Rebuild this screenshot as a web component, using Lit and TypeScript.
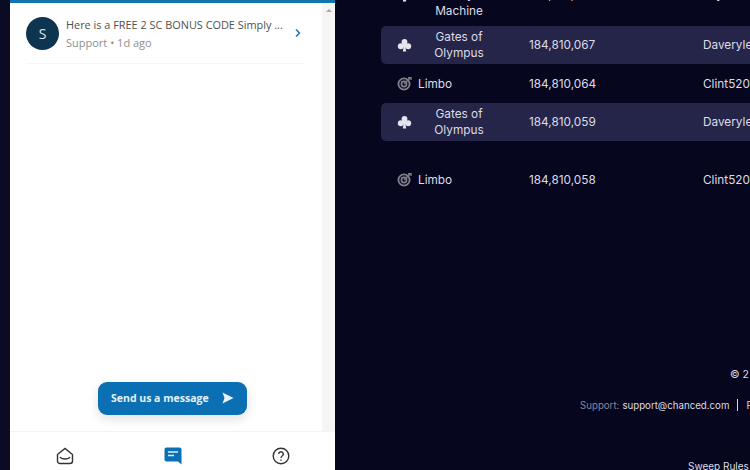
import { LitElement, html, css, svg } from "lit";
import { customElement } from "lit/decorators.js";

const club = svg`<svg class="ico" width="15" height="15" viewBox="0 0 16 16"><circle cx="8" cy="4.200" r="3.100" fill="#e4e4ec"/><circle cx="4" cy="8.800" r="3.100" fill="#e4e4ec"/><circle cx="12" cy="8.800" r="3.100" fill="#e4e4ec"/><rect x="6" y="6" width="4" height="4" fill="#e4e4ec"/><path d="M7.200 8h1.600l1 6.500H6.200z" fill="#e4e4ec"/></svg>`;
const target = svg`<svg class="ico" width="15" height="15" viewBox="0 0 15 15" fill="none" stroke="#808088"><circle cx="7" cy="8" r="5.600" stroke-width="1.800"/><circle cx="7" cy="8" r="2.600" stroke-width="1.600"/><path d="M7 8l6-6" stroke-width="1.500"/><path d="M11 1.600h3v2.400" stroke-width="1.300"/></svg>`;

@customElement("app-root")
export class AppRoot extends LitElement {
  static styles = css`
    :host { display: block; width: 750px; height: 470px; overflow: hidden; background: #06061f; }
    .page { display: flex; width: 750px; height: 470px; overflow: hidden; }
    .strip { width: 10px; flex: none; background: #0b0b26; }
    .panel { width: 325px; flex: none; display: flex; flex-direction: column; background: #fff; font-family: "Open Sans", sans-serif; }
    .topbar { height: 3px; flex: none; background: #0f74b0; }
    .body { flex: 1; display: flex; min-height: 0; }
    .content { flex: 1; display: flex; flex-direction: column; align-items: center; min-width: 0; padding-bottom: 16px; }
    .scroll { width: 13px; flex: none; background: #f5f5f5; display: flex; justify-content: center; padding-top: 6px; box-sizing: border-box; }
    .arrow { width: 0; height: 0; border-left: 3px solid transparent; border-right: 3px solid transparent; border-bottom: 3px solid #a9a9a9; }
    .item { align-self: stretch; display: flex; align-items: center; height: 54px; margin: 7px 17px 0 16px; box-sizing: border-box; border-bottom: 1px solid #f6f6f6; }
    .avatar { width: 33px; height: 33px; border-radius: 50%; background: #0d3550; color: #dfe8ee; font-size: 14px; display: flex; align-items: center; justify-content: center; flex: none; margin-bottom: 7px; }
    .txt { margin-left: 7px; flex: 1; min-width: 0; margin-bottom: 7px; }
    .title { font-size: 10.900px; line-height: 18px; color: #4f4f4f; white-space: nowrap; }
    .sub { font-size: 11px; line-height: 17px; color: #8e8e8e; }
    .chev { flex: none; margin: 0 3px 7px 0; }
    .spacer { flex: 1; }
    .send { display: flex; align-items: center; width: 149px; height: 33px; box-sizing: border-box; padding: 0 0 2px 13px; background: #0a70b3; color: #e6f2fa; border-radius: 9px; font-size: 10.500px; font-weight: 700; box-shadow: 0 4px 12px rgba(0,0,0,.12); margin-left: 13px; }
    .send svg { margin-left: 13px; }
    .nav { height: 39px; flex: none; display: flex; border-top: 1px solid #f4f4f4; box-sizing: border-box; padding-left: 1px; }
    .nav div { flex: 1; display: flex; justify-content: center; padding-top: 15px; }
    .main { flex: 1; min-width: 0; overflow: hidden; display: flex; flex-direction: column; padding-left: 46px; font-family: Inter, sans-serif; color: #dcdce6; font-size: 11.800px; background: #06061f; }
    .rows { width: 420px; margin-top: -32px; display: flex; flex-direction: column; flex: none; }
    .row { display: grid; grid-template-columns: 148px 174px 1fr; align-items: center; height: 39px; border-radius: 5px; white-space: nowrap; }
    .top { height: 54px; margin-bottom: 4px; }
    .hl { background: #25254a; height: 38px; }
    .g { display: flex; align-items: center; padding-left: 16px; }
    .g .name { width: 78px; text-align: center; line-height: 16px; margin-left: 8px; white-space: normal; flex: none; }
    .g .plain { margin-left: 6px; }
    .ico { flex: none; }
    .gap { height: 19px; flex: none; }
    .foot { display: flex; flex-direction: column; width: 420px; flex: none; }
    .copy { margin-top: 170px; padding-left: 349px; font-size: 10.500px; line-height: 12px; white-space: nowrap; }
    .sup { display: flex; align-items: center; margin-left: 199px; font-size: 9.700px; height: 16px; margin-top: 16px; white-space: nowrap; }
    .sup .l { color: #85859c; margin-right: 3px; }
    .sup .bar { width: 1px; height: 12px; background: #d8d8e4; margin: 0 8px; flex: none; }
    .rules { margin: 47px 0 0 307px; font-size: 10px; line-height: 12px; white-space: nowrap; }
  `;

  render() {
    return html`<div class="page">
      <div class="strip"></div>
      <div class="panel">
        <div class="topbar"></div>
        <div class="body">
          <div class="content">
            <div class="item">
              <div class="avatar">S</div>
              <div class="txt">
                <div class="title">Here is a FREE 2 SC BONUS CODE Simply ...</div>
                <div class="sub">Support • 1d ago</div>
              </div>
              <svg class="chev" width="8" height="10" viewBox="0 0 8 10" fill="none" stroke="#0a70b3" stroke-width="1.400"><path d="M2 1.500l3.500 3.500-3.500 3.500"/></svg>
            </div>
            <div class="spacer"></div>
            <div class="send">Send us a message
              <svg width="12" height="12" viewBox="0 0 12 12"><path d="M0.500 .5L11.500 6 .5 11.500l2-5.500z" fill="#eaf4fb"/></svg>
            </div>
          </div>
          <div class="scroll"><div class="arrow"></div></div>
        </div>
        <div class="nav">
          <div><svg width="18" height="18" viewBox="0 0 18 18" fill="none" stroke="#333" stroke-width="1.400"><path d="M1.500 7.500L9 1.500l7.500 6V14a2.500 2.500 0 0 1-2.500 2.500H4A2.500 2.500 0 0 1 1.500 14z"/><path d="M4 10c1.500 2.600 8.500 2.600 10 0"/></svg></div>
          <div><svg width="18" height="19" viewBox="0 0 18 19"><path d="M2.500 0.500h13a2 2 0 0 1 2 2v15l-3.500-3h-11.500a2 2 0 0 1-2-2v-10a2 2 0 0 1 2-2z" fill="#0a70b3"/><path d="M4 5h10M4 8.500h6" stroke="#dcecf7" stroke-width="1.500"/></svg></div>
          <div><svg width="18" height="18" viewBox="0 0 18 18" fill="none" stroke="#333" stroke-width="1.400"><circle cx="9" cy="9" r="7.800"/><path d="M6.700 7a2.300 2.300 0 1 1 3.500 2c-.8.500-1.200 1-1.200 2"/><path d="M9 12.500v1.300"/></svg></div>
        </div>
      </div>
      <div class="main">
        <div class="rows">
          <div class="row top"><div class="g">${club}<span class="name">Fruit<br>Party<br>Machine</span></div><span>184,810,070</span><span>Jayden</span></div>
          <div class="row hl"><div class="g">${club}<span class="name">Gates of Olympus</span></div><span>184,810,067</span><span>Daveryle</span></div>
          <div class="row"><div class="g">${target}<span class="plain">Limbo</span></div><span>184,810,064</span><span>Clint5204</span></div>
          <div class="row hl"><div class="g">${club}<span class="name">Gates of Olympus</span></div><span>184,810,059</span><span>Daveryle</span></div>
          <div class="gap"></div>
          <div class="row"><div class="g">${target}<span class="plain">Limbo</span></div><span>184,810,058</span><span>Clint5204</span></div>
        </div>
        <div class="foot">
          <div class="copy">© 2</div>
          <div class="sup"><span class="l">Support:</span><span>support@chanced.com</span><span class="bar"></span><span>P</span></div>
          <div class="rules">Sweep Rules</div>
        </div>
      </div>
    </div>`;
  }
}
